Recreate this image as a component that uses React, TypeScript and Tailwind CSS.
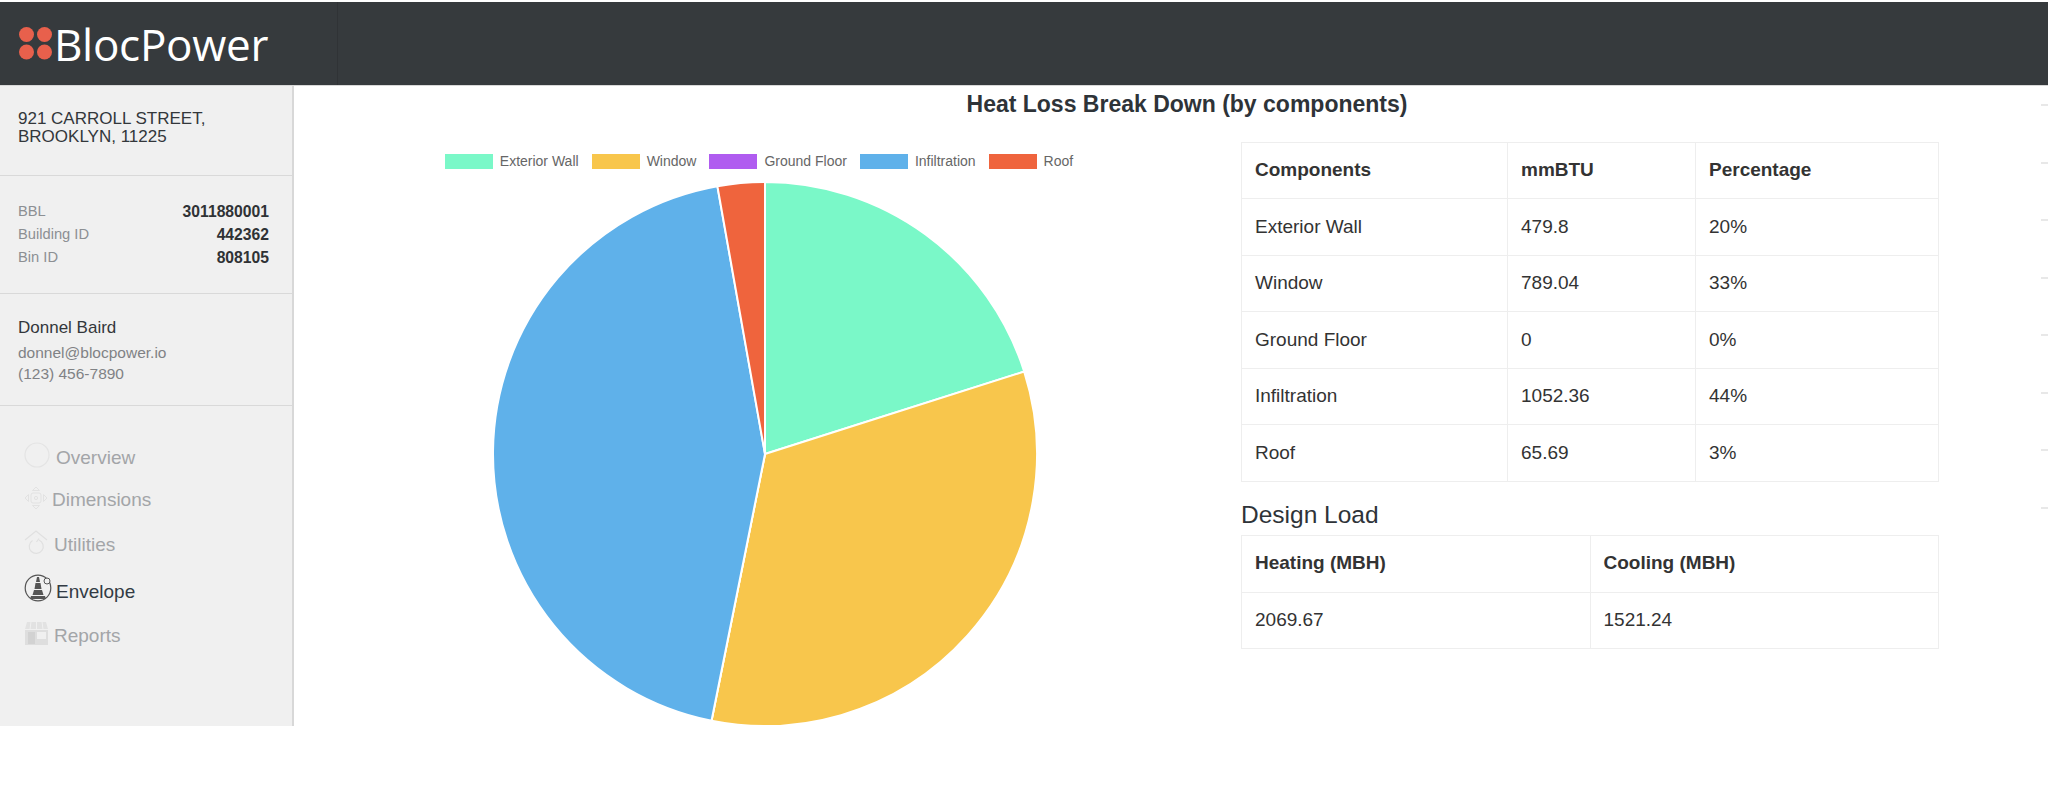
const sans = "font-['Liberation_Sans',Arial,sans-serif]";

const rows = [
  ["Exterior Wall", "479.8", "20%"],
  ["Window", "789.04", "33%"],
  ["Ground Floor", "0", "0%"],
  ["Infiltration", "1052.36", "44%"],
  ["Roof", "65.69", "3%"],
];

const legend = [
  ["Exterior Wall", "bg-[#7af8c8]"],
  ["Window", "bg-[#f8c64c]"],
  ["Ground Floor", "bg-[#b05cf0]"],
  ["Infiltration", "bg-[#5fb1ea]"],
  ["Roof", "bg-[#ef643d]"],
];

function slice(from: number, to: number) {
  const cx = 273, cy = 273, r = 272;
  const a = ((from / 100) * 360 - 90) * (Math.PI / 180);
  const b = ((to / 100) * 360 - 90) * (Math.PI / 180);
  const large = to - from > 50 ? 1 : 0;
  return `M${cx} ${cy}L${cx + r * Math.cos(a)} ${cy + r * Math.sin(a)}A${r} ${r} 0 ${large} 1 ${cx + r * Math.cos(b)} ${cy + r * Math.sin(b)}Z`;
}

function Pie() {
  const parts: [number, number, string][] = [
    [0, 20.1, "#7af8c8"],
    [20.1, 53.15, "#f8c64c"],
    [53.15, 53.15, "#b05cf0"],
    [53.15, 97.2, "#5fb1ea"],
    [97.2, 100, "#ef643d"],
  ];
  return (
    <svg width="546" height="546" viewBox="0 0 546 546" className="block">
      {parts.map(([a, b, c]) => (
        <path key={c} d={slice(a, b)} fill={c} stroke="#ffffff" strokeWidth="2" />
      ))}
    </svg>
  );
}

function Logo() {
  return (
    <svg width="36" height="35" viewBox="0 0 36 35" className="block shrink-0">
      <circle cx="8.5" cy="8.5" r="7.5" fill="#e8604c" />
      <circle cx="26.5" cy="8.5" r="7.5" fill="#e8604c" />
      <circle cx="8.5" cy="26" r="7.5" fill="#e8604c" />
      <circle cx="26.5" cy="26" r="7.5" fill="#e8604c" />
    </svg>
  );
}

const IconOverview = () => (
  <svg width="26" height="26" viewBox="0 0 26 26" fill="none" stroke="#e4e4e4" strokeWidth="1.2"><circle cx="13" cy="13" r="12" /></svg>
);
const IconDimensions = () => (
  <svg width="24" height="24" viewBox="0 0 24 24" fill="none" stroke="#e2e2e2" strokeWidth="1">
    <path d="M12 1l3.5 3.5h-7zM12 23l3.5-3.5h-7zM1 12l3.5-3.5v7zM23 12l-3.5-3.5v7z" />
    <rect x="7" y="7" width="10" height="10" rx="2" />
    <circle cx="12" cy="12" r="1.6" />
  </svg>
);
const IconUtilities = () => (
  <svg width="24" height="26" viewBox="0 0 24 26" fill="none" stroke="#e0e0e0" strokeWidth="1.2">
    <path d="M1 11L12 2l11 9" />
    <path d="M8.5 11.5a7 7 0 1 0 6.5-.5M12.5 13l2.5-3.5" />
  </svg>
);
const IconEnvelope = () => (
  <svg width="28" height="28" viewBox="0 0 28 28">
    <circle cx="14" cy="14" r="12.8" fill="none" stroke="#555555" strokeWidth="1.2" />
    <path d="M13 3h2l1 5h-4zM11.5 9h5l1 6h-7zM10 16h8l1.5 5h-11zM7 22h14l1 3H6z" fill="#555555" />
    <circle cx="23" cy="7" r="3" fill="#f0f0f0" stroke="#555555" strokeWidth="1" />
  </svg>
);
const IconReports = () => (
  <svg width="25" height="25" viewBox="0 0 25 25">
    <path d="M3 1h19l2 7H1z" fill="#e2e2e2" />
    <path d="M7 1L6 8M12.5 1v7M18 1l1 7" stroke="#f0f0f0" strokeWidth="1" />
    <rect x="1" y="9" width="23" height="15" fill="#dedede" />
    <rect x="4" y="11" width="7" height="12" fill="#d2d2d2" />
    <rect x="13" y="11" width="9" height="7" fill="#f0f0f0" />
  </svg>
);

function Nav({ icon, label, active, gap, h }: { icon: React.ReactNode; label: string; active?: boolean; gap: string; h: string }) {
  return (
    <div className={`flex items-end ${gap} ${h}`}>
      <span className="shrink-0">{icon}</span>
      <span className={`text-[19px] leading-[20px] ${active ? "text-[#333b44]" : "text-[#a3a5a8]"}`}>{label}</span>
    </div>
  );
}

const td = "border border-[#eeeeee] px-[13px] align-middle";

export default function App() {
  return (
    <div className={`${sans} w-[2048px] h-[796px] bg-white pt-[2px] overflow-hidden text-[#333333]`}>
      <header className="h-[84px] bg-[#363a3d] flex items-center border-b border-[#d8d8d8]">
        <div className="w-[338px] h-full flex items-center pl-[18px] border-r border-[#303336]">
          <Logo />
          <span className="font-['Open_Sans',sans-serif] font-medium text-[44px] leading-none text-white tracking-[-0.3px]">BlocPower</span>
        </div>
      </header>
      <div className="flex h-[640px]">
        <aside className="w-[294px] shrink-0 bg-[#f0f0f0] border-r-2 border-[#d8d8d8] flex flex-col">
          <div className="h-[90px] border-b border-[#d9d9d9] pl-[18px] pt-[24px] text-[17px] leading-[18px] text-[#33373b]">
            921 CARROLL STREET,<br />BROOKLYN, 11225
          </div>
          <div className="h-[118px] border-b border-[#d9d9d9] pl-[18px] pr-[23px] pt-[24px] text-[14.7px] leading-[23px]">
            {[["BBL", "3011880001"], ["Building ID", "442362"], ["Bin ID", "808105"]].map(([k, v]) => (
              <div key={k} className="flex justify-between">
                <span className="text-[#8c8f93]">{k}</span>
                <span className="font-bold text-[15.7px] text-[#2f3235]">{v}</span>
              </div>
            ))}
          </div>
          <div className="h-[112px] border-b border-[#d9d9d9] pl-[18px] pt-[24px]">
            <div className="text-[17px] leading-[20px] text-[#33373b]">Donnel Baird</div>
            <div className="text-[15.5px] leading-[21px] text-[#808285] mt-[4px]">donnel@blocpower.io<br />(123) 456-7890</div>
          </div>
          <nav className="pl-[24px] pt-[30px] flex flex-col">
            <Nav icon={<IconOverview />} label="Overview" gap="gap-[6px]" h="h-[32px]" />
            <Nav icon={<IconDimensions />} label="Dimensions" gap="gap-[4px]" h="h-[42px]" />
            <Nav icon={<IconUtilities />} label="Utilities" gap="gap-[6px]" h="h-[45px]" />
            <Nav icon={<IconEnvelope />} label="Envelope" active gap="gap-[4px]" h="h-[47px]" />
            <Nav icon={<IconReports />} label="Reports" gap="gap-[5px]" h="h-[44px]" />
          </nav>
        </aside>
        <main className="flex-1 flex flex-col min-w-0">
          <h1 className="text-center text-[23px] leading-[26px] font-bold text-[#2e3338] mt-[5px] ml-[32px]">Heat Loss Break Down (by components)</h1>
          <div className="flex mt-[25px]">
            <div className="w-[947px] shrink-0 flex flex-col items-center">
              <div className="flex items-center text-[14px] leading-[16px] text-[#666666] mt-[11px] gap-[13px] ml-[-17px]">
                {legend.map(([name, c]) => (
                  <div key={name} className="flex items-center gap-[7px]">
                    <span className={`w-[48px] h-[15px] ${c}`} />
                    <span>{name}</span>
                  </div>
                ))}
              </div>
              <div className="mt-[12px] ml-[-6px]"><Pie /></div>
            </div>
            <div className="w-[698px] shrink-0 text-[19px]">
              <table className="w-full border-collapse table-fixed">
                <colgroup><col className="w-[266px]" /><col className="w-[188px]" /><col /></colgroup>
                <tbody>
                  <tr className="h-[56px] font-bold">
                    <td className={td}>Components</td><td className={td}>mmBTU</td><td className={td}>Percentage</td>
                  </tr>
                  {rows.map(r => (
                    <tr key={r[0]} className="h-[56.5px]">
                      {r.map(c => <td key={c} className={td}>{c}</td>)}
                    </tr>
                  ))}
                </tbody>
              </table>
              <h2 className="text-[24.5px] leading-[28px] text-[#2e3338] mt-[19px] mb-[6px] font-normal">Design Load</h2>
              <table className="w-full border-collapse table-fixed">
                <tbody>
                  <tr className="h-[57px] font-bold"><td className={td}>Heating (MBH)</td><td className={td}>Cooling (MBH)</td></tr>
                  <tr className="h-[56px]"><td className={td}>2069.67</td><td className={td}>1521.24</td></tr>
                </tbody>
              </table>
            </div>
            <div className="ml-auto w-[7px] flex flex-col gap-[55.5px] mt-[-38px]">
              {[0, 1, 2, 3, 4, 5, 6, 7].map(i => (
                <span key={i} className="block h-[2px] bg-[#e8e8e8]" />
              ))}
            </div>
          </div>
        </main>
      </div>
    </div>
  );
}
